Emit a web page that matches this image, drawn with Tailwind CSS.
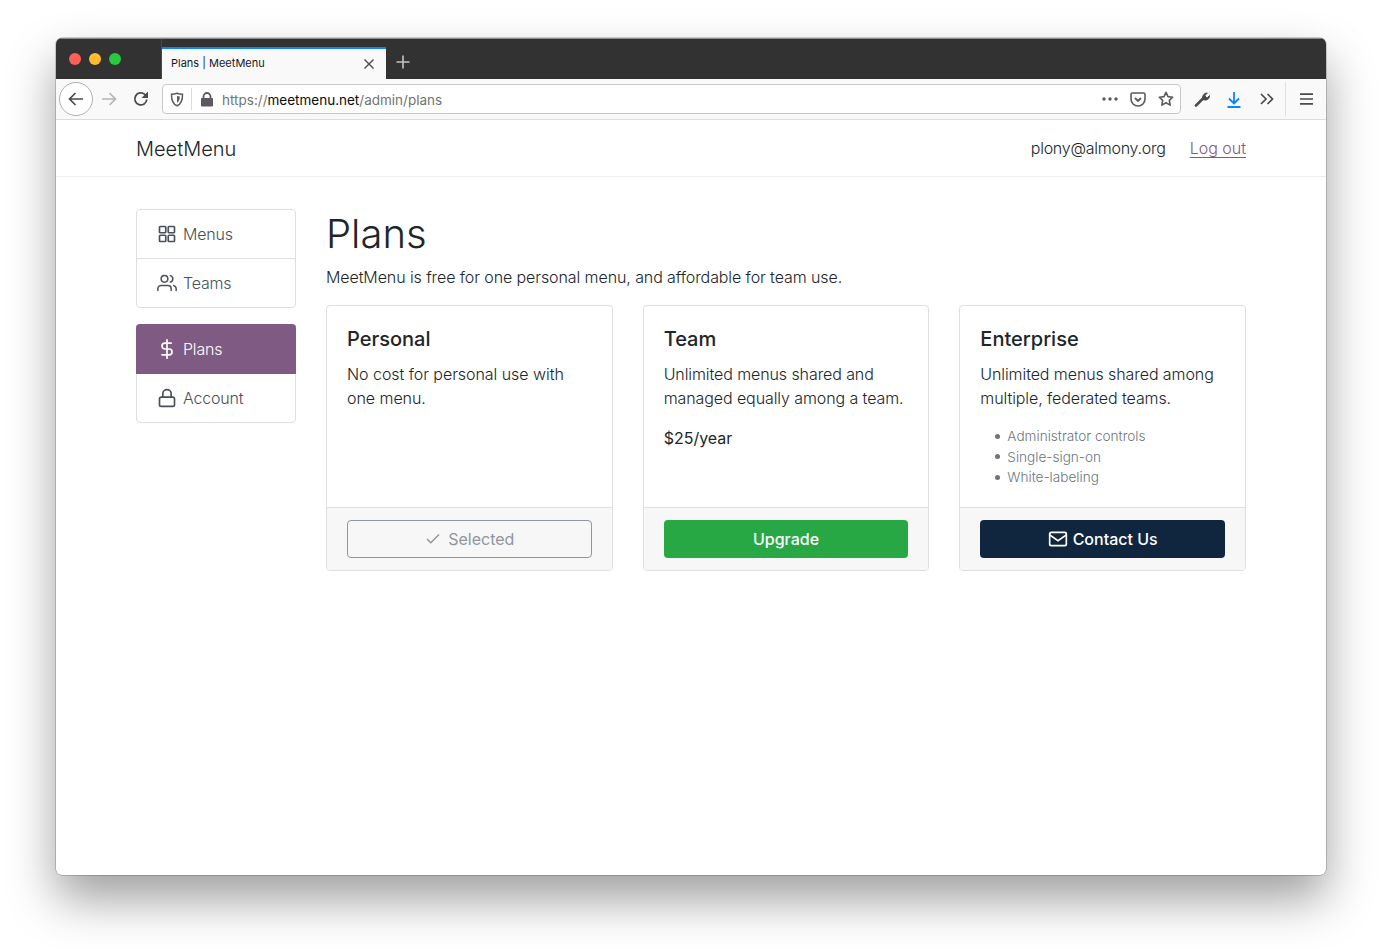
<!DOCTYPE html>
<html lang="en">
<head>
    <meta charset="UTF-8">
    <title>Plans | MeetMenu</title>
    <script src="https://cdn.jsdelivr.net/npm/@tailwindcss/browser@4"></script>
</head>
<body class="bg-white h-[949px] overflow-hidden font-['Inter',sans-serif] text-[#212529]">
    <div class="pt-[38px] pl-[56px]">
        <!-- Browser window -->
        <div class="w-[1270px] h-[837px] rounded-[6px] overflow-hidden bg-white shadow-[0_0_0_0.5px_rgba(0,0,0,0.35),0_24px_48px_rgba(0,0,0,0.38)] flex flex-col">

            <!-- Tab strip -->
            <div class="h-[41px] bg-[#323232] border-t border-[#8a8a8a] flex shrink-0">
                <div class="w-[106px] flex items-center gap-[8px] pl-[13px] border-r border-[#4a4a4a]">
                    <span class="w-[12px] h-[12px] rounded-full bg-[#ff5f57]"></span>
                    <span class="w-[12px] h-[12px] rounded-full bg-[#febc2e]"></span>
                    <span class="w-[12px] h-[12px] rounded-full bg-[#28c840]"></span>
                </div>
                <div class="w-[224px] mt-[8px] bg-[#f9f9fa] border-t-2 border-[#0a84ff] flex items-center justify-between pl-[9px] pr-[11px]">
                    <span class="pb-[2px] text-[11px] text-[#18181a]">Plans | MeetMenu</span>
                    <svg width="12" height="12" viewBox="0 0 12 12" fill="none" stroke="#4a4a4f" stroke-width="1.4"><path d="M1.5 1.5l9 9M10.5 1.5l-9 9"/></svg>
                </div>
                <div class="w-[34px] flex items-center justify-center pt-[6px]">
                    <svg width="16" height="16" viewBox="0 0 16 16" fill="none" stroke="#c4c4c4" stroke-width="1.6"><path d="M8 1.5v13M1.5 8h13"/></svg>
                </div>
            </div>

            <!-- Toolbar -->
            <div class="h-[41px] bg-[#f9f9fa] border-b border-[#dcdcdc] flex items-center shrink-0 pl-[3px]">
                <div class="w-[34px] h-[34px] rounded-full bg-white border border-[#b1b1b3] flex items-center justify-center shrink-0">
                    <svg width="18" height="18" viewBox="0 0 18 18" fill="none" stroke="#4a4a4f" stroke-width="1.7"><path d="M16 9H2.5M8.5 3L2.5 9l6 6"/></svg>
                </div>
                <div class="w-[32px] flex justify-center shrink-0">
                    <svg width="18" height="18" viewBox="0 0 18 18" fill="none" stroke="#b5b5b6" stroke-width="1.7"><path d="M2 9h13.5M9.5 3l6 6-6 6"/></svg>
                </div>
                <div class="w-[32px] flex justify-center shrink-0">
                    <svg width="16" height="16" viewBox="0 0 16 16" fill="none" stroke="#4a4a4f" stroke-width="1.8"><path d="M13.8 8.5A6 6 0 1 1 11.8 3.400L14 5.200"/><path d="M15 .5v6.500H8.500z" fill="#4a4a4f" stroke="none"/></svg>
                </div>
                <!-- Url bar -->
                <div class="ml-[5px] w-[1019px] h-[30px] bg-white border border-[#c8c8c9] rounded-[4px] flex items-center shrink-0">
                    <div class="w-[29px] h-[22px] border-r border-[#dcdcdc] flex justify-center items-center shrink-0">
                        <svg width="14" height="15" viewBox="0 0 14 15" fill="none"><path d="M7 1.2c2 .8 3.7 1 5.5 1 .2 5.500-1.500 9.800-5.500 11.600C3 12 1.300 7.700 1.500 2.200c1.800 0 3.500-.2 5.500-1z" stroke="#5b5b5f" stroke-width="1.500"/><path d="M7 4c1 .3 1.800.5 2.800.5C9.800 7.500 9 9.500 7 10.700z" fill="#5b5b5f"/></svg>
                    </div>
                    <div class="w-[29px] flex justify-center shrink-0">
                        <svg width="14" height="15" viewBox="0 0 14 15"><path d="M3.500 6.500V4.500a3.500 3.500 0 0 1 7 0v2" fill="none" stroke="#5b5b5f" stroke-width="1.800"/><rect x="1" y="6" width="12" height="8.500" rx="1" fill="#5b5b5f"/></svg>
                    </div>
                    <span class="pt-[2px] pl-[1px] text-[13.5px] text-[#737373] whitespace-nowrap">https://<span class="text-[#0c0c0d]">meetmenu.net</span>/admin/plans</span>
                    <div class="ml-auto flex items-center">
                        <svg width="16" height="4" viewBox="0 0 16 4" fill="#5b5b5f"><circle cx="2" cy="2" r="1.700"/><circle cx="8" cy="2" r="1.700"/><circle cx="14" cy="2" r="1.700"/></svg>
                        <svg class="ml-[12px]" width="16" height="15" viewBox="0 0 16 15" fill="none" stroke="#5b5b5f" stroke-width="1.600"><path d="M2.500 1h11A1.500 1.500 0 0 1 15 2.500V7a7 7 0 0 1-14 0V2.500A1.500 1.500 0 0 1 2.500 1z"/><path d="M5 6l3 3 3-3" stroke-width="1.900"/></svg>
                        <svg class="ml-[12px] mr-[6px]" width="16" height="16" viewBox="0 0 16 16" fill="none" stroke="#5b5b5f" stroke-width="1.600" stroke-linejoin="round"><path d="M8 1.300l2 4.300 4.700.6-3.400 3.200.9 4.700L8 11.800l-4.200 2.300.9-4.700L1.300 6.200 6 5.600z"/></svg>
                    </div>
                </div>
                <div class="w-[37px] flex justify-center shrink-0 pl-[4px]">
                    <svg width="16" height="16" viewBox="0 0 16 16" fill="none" stroke="#4a4a4f"><path d="M2 14.500l7-7" stroke-width="2.600" stroke-linecap="round"/><path d="M9 8.500C7.600 5.500 9.800 2 13.300 2L11 4.300l.6 1.800 1.800.6L15.500 4.500c.3 3.500-3 5.500-6.500 4z" fill="#4a4a4f" stroke-width="1"/></svg>
                </div>
                <div class="w-[32px] flex justify-center shrink-0">
                    <svg width="14" height="17" viewBox="0 0 14 17" fill="none" stroke="#0a84ff" stroke-width="1.800"><path d="M7 1v11M2 7.500L7 12.500l5-5M.5 16h13"/></svg>
                </div>
                <div class="w-[33px] flex justify-center shrink-0">
                    <svg width="14" height="12" viewBox="0 0 14 12" fill="none" stroke="#4a4a4f" stroke-width="1.700"><path d="M1 1l5 5-5 5M7.500 1l5 5-5 5"/></svg>
                </div>
                <div class="ml-[2px] w-[1px] h-[34px] bg-[#e0e0e1] shrink-0"></div>
                <div class="w-[41px] flex justify-center shrink-0">
                    <svg width="13" height="12" viewBox="0 0 13 12" stroke="#4a4a4f" stroke-width="1.700"><path d="M0 1.200h13M0 6h13M0 10.800h13"/></svg>
                </div>
            </div>

            <!-- Page header -->
            <header class="h-[57px] border-b border-[#eeeeee] flex items-center justify-between px-[80px] shrink-0">
                <span class="pt-[1px] text-[20px] font-light">MeetMenu</span>
                <div class="flex items-center gap-[24px] font-light">
                    <span class="tracking-[-0.25px]">plony@almony.org</span>
                    <a href="#" class="text-[#7f5a83] underline underline-offset-[3px]">Log out</a>
                </div>
            </header>

            <!-- Page body -->
            <div class="flex gap-[30px] px-[80px] pt-[32px]">
                <!-- Sidebar -->
                <nav class="w-[160px] shrink-0 flex flex-col gap-[16px] font-light text-[#495057] tracking-[-0.2px]">
                    <div class="border border-[#dfdfdf] rounded-[4px]">
                        <a class="h-[49px] flex items-center gap-[6px] pl-[20px] border-b border-[#dfdfdf]">
                            <svg width="20" height="20" viewBox="0 0 24 24" fill="none" stroke="#495057" stroke-width="2"><rect x="3" y="3" width="7.500" height="7.500" rx="1"/><rect x="13.500" y="3" width="7.500" height="7.500" rx="1"/><rect x="3" y="13.500" width="7.500" height="7.500" rx="1"/><rect x="13.500" y="13.500" width="7.500" height="7.500" rx="1"/></svg>
                            Menus
                        </a>
                        <a class="h-[48px] flex items-center gap-[6px] pl-[20px]">
                            <svg width="20" height="20" viewBox="0 0 24 24" fill="none" stroke="#495057" stroke-width="1.800" stroke-linecap="round"><path d="M17 21v-2a4 4 0 0 0-4-4H5a4 4 0 0 0-4 4v2"/><circle cx="9" cy="7" r="4"/><path d="M23 21v-2a4 4 0 0 0-3-3.870M16 3.130a4 4 0 0 1 0 7.750"/></svg>
                            Teams
                        </a>
                    </div>
                    <div class="border border-[#dfdfdf] rounded-[4px]">
                        <a class="-mx-[1px] -mt-[1px] h-[50px] rounded-t-[4px] flex items-center gap-[6px] pl-[21px] bg-[#7f5a83] text-white">
                            <svg width="20" height="20" viewBox="0 0 24 24" fill="none" stroke="#ffffff" stroke-width="2" stroke-linecap="round"><path d="M12 1v22M17 5H9.500a3.500 3.500 0 0 0 0 7h5a3.500 3.500 0 0 1 0 7H6"/></svg>
                            Plans
                        </a>
                        <a class="h-[48px] flex items-center gap-[6px] pl-[20px]">
                            <svg width="20" height="20" viewBox="0 0 24 24" fill="none" stroke="#495057" stroke-width="2"><rect x="3" y="11" width="18" height="11" rx="2"/><path d="M7 11V7a5 5 0 0 1 10 0v4"/></svg>
                            Account
                        </a>
                    </div>
                </nav>

                <!-- Main -->
                <main class="flex-1 min-w-0">
                    <h1 class="text-[40px] leading-[48px] font-light mt-[1px]">Plans</h1>
                    <p class="font-light leading-[24px] mt-[7px] mb-[16px] tracking-[-0.09px]">MeetMenu is free for one personal menu, and affordable for team use.</p>
                    <div class="grid grid-cols-3 gap-[30px]">
                        <div class="h-[266px] border border-[#dfdfdf] rounded-[4px] flex flex-col overflow-hidden">
                            <div class="flex-1 p-[20px] pb-0">
                                <h2 class="text-[20px] leading-[24px] font-medium mb-[11px] mt-[1px]">Personal</h2>
                                <p class="font-light leading-[24px] tracking-[-0.05px]">No cost for personal use with one menu.</p>
                            </div>
                            <div class="h-[63px] bg-[#f7f7f7] border-t border-[#dfdfdf] px-[20px] flex items-center">
                                <div class="w-full h-[38px] border border-[#8f969d] rounded-[4px] flex items-center justify-center gap-[6px] text-[#8f969d]">
                                    <svg width="18" height="18" viewBox="0 0 24 24" fill="none" stroke="#8f969d" stroke-width="2"><path d="M20 6L9 17l-5-5"/></svg>
                                    Selected
                                </div>
                            </div>
                        </div>
                        <div class="h-[266px] border border-[#dfdfdf] rounded-[4px] flex flex-col overflow-hidden">
                            <div class="flex-1 p-[20px] pb-0">
                                <h2 class="text-[20px] leading-[24px] font-medium mb-[11px] mt-[1px]">Team</h2>
                                <p class="font-light leading-[24px] mb-[16px] tracking-[-0.09px]">Unlimited menus shared and managed equally among a team.</p>
                                <p class="leading-[24px]">$25/year</p>
                            </div>
                            <div class="h-[63px] bg-[#f7f7f7] border-t border-[#dfdfdf] px-[20px] flex items-center">
                                <div class="w-full h-[38px] bg-[#28a745] rounded-[4px] flex items-center justify-center text-white font-medium">Upgrade</div>
                            </div>
                        </div>
                        <div class="h-[266px] border border-[#dfdfdf] rounded-[4px] flex flex-col overflow-hidden">
                            <div class="flex-1 p-[20px] pb-0">
                                <h2 class="text-[20px] leading-[24px] font-medium mb-[11px] mt-[1px]">Enterprise</h2>
                                <p class="font-light leading-[24px] mb-[16px] tracking-[-0.09px]">Unlimited menus shared among multiple, federated teams.</p>
                                <ul class="pl-[15px] text-[13.6px] leading-[20.6px] font-light text-[#6c757d]">
                                    <li class="flex items-center gap-[7px]"><span class="w-[5px] h-[5px] rounded-full bg-[#6c757d]"></span>Administrator controls</li>
                                    <li class="flex items-center gap-[7px]"><span class="w-[5px] h-[5px] rounded-full bg-[#6c757d]"></span>Single-sign-on</li>
                                    <li class="flex items-center gap-[7px]"><span class="w-[5px] h-[5px] rounded-full bg-[#6c757d]"></span>White-labeling</li>
                                </ul>
                            </div>
                            <div class="h-[63px] bg-[#f7f7f7] border-t border-[#dfdfdf] px-[20px] flex items-center">
                                <div class="w-full h-[38px] bg-[#10263f] rounded-[4px] flex items-center justify-center gap-[5px] text-white font-medium">
                                    <svg width="20" height="20" viewBox="0 0 24 24" fill="none" stroke="#ffffff" stroke-width="2"><rect x="2" y="4" width="20" height="16" rx="2"/><path d="M2 7l10 7 10-7"/></svg>
                                    Contact Us
                                </div>
                            </div>
                        </div>
                    </div>
                </main>
            </div>
        </div>
    </div>
</body>
</html>
